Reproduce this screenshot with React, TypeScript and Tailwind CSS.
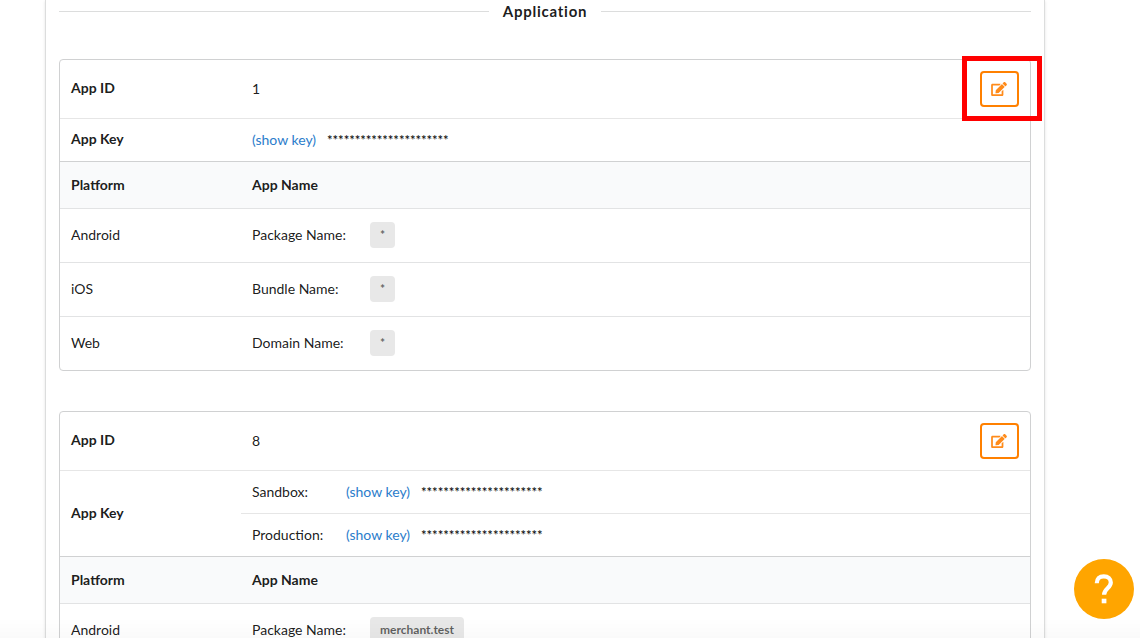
import React from "react";
import { FaEdit } from "react-icons/fa";

const MASK = "**********************";

type AppKey = { label?: string };
type Platform = { platform: string; label: string; value: string };

const KeyCell = ({ label }: AppKey) => (
  <td className="h-[43px] border-t border-[#e6e6e6] px-[11px]">
    <div className="flex items-center">
      {label && <span className="w-[94px]">{label}</span>}
      <a href="#show-key" className="text-[#2b7dcb]">(show key)</a>
      <span className="ml-[11px] text-[13px] font-medium text-black">{MASK}</span>
    </div>
  </td>
);

const AppTable = ({ id, keys, platforms, highlighted }: {
  id: string;
  keys: AppKey[];
  platforms: Platform[];
  highlighted?: boolean;
}) => (
  <div className="mb-10 rounded border border-[#d0d1d2]">
    <table className="w-full table-fixed border-separate border-spacing-0">
      <colgroup>
        <col className="w-[181px]" />
        <col />
      </colgroup>
      <tbody>
        <tr>
          <th scope="row" className="h-[58px] px-[11px] pb-0.5 text-left font-bold">App ID</th>
          <td className="px-[11px]">
            <div className="flex items-center justify-between">
              {id}
              <div className="relative">
                <button
                  type="button"
                  aria-label="Edit application"
                  className="flex h-9 w-[39px] items-center justify-center rounded border-2 border-[#ff8000] pr-px text-[#ff8b1a]"
                >
                  <FaEdit className="h-[14px] w-4" />
                </button>
                {highlighted && (
                  <div className="pointer-events-none absolute -top-[15px] -right-[23px] -bottom-[14px] -left-[18px] border-5 border-[#ff0000]" />
                )}
              </div>
            </div>
          </td>
        </tr>
        {keys.map((key, i) => (
          <tr key={i}>
            {i === 0 && (
              <th
                scope="row"
                rowSpan={keys.length}
                className="border-t border-[#e6e6e6] px-[11px] pb-0.5 text-left font-bold"
              >
                App Key
              </th>
            )}
            <KeyCell label={key.label} />
          </tr>
        ))}
        <tr className="bg-[#f9fafb]">
          <th scope="col" className="h-[47px] border-t border-[#d0d1d2] px-[11px] text-left font-bold">Platform</th>
          <th scope="col" className="border-t border-[#d0d1d2] px-[11px] text-left font-bold">App Name</th>
        </tr>
        {platforms.map(({ platform, label, value }) => (
          <tr key={platform}>
            <td className="h-[54px] border-t border-[#e2e3e4] px-[11px] pb-0.5">{platform}</td>
            <td className="border-t border-[#e2e3e4] px-[11px] pb-0.5">
              <div className="flex items-center">
                <span className="w-[118px]">{label}</span>
                <span className="rounded bg-[#e8e8e8] px-[10px] py-[5px] text-xs leading-4 font-bold text-black/60">
                  {value}
                </span>
              </div>
            </td>
          </tr>
        ))}
      </tbody>
    </table>
  </div>
);

export default function App() {
  return (
    <div className="h-screen overflow-hidden bg-white font-['Lato',sans-serif] text-sm leading-5 text-black/90">
      <main className="mr-[95px] ml-[45px] border-x border-[#dcdddd] px-[13px] shadow-sm">
        <h4 className="mb-[37px] flex items-center text-[15px] leading-[22px] font-bold tracking-wider">
          <span className="h-px flex-1 bg-[#dcdddd]" />
          <span className="px-[14px]">Application</span>
          <span className="h-px flex-1 bg-[#dcdddd]" />
        </h4>
        <AppTable
          id="1"
          highlighted
          keys={[{}]}
          platforms={[
            { platform: "Android", label: "Package Name:", value: "*" },
            { platform: "iOS", label: "Bundle Name:", value: "*" },
            { platform: "Web", label: "Domain Name:", value: "*" },
          ]}
        />
        <AppTable
          id="8"
          keys={[{ label: "Sandbox:" }, { label: "Production:" }]}
          platforms={[{ platform: "Android", label: "Package Name:", value: "merchant.test" }]}
        />
      </main>

      <div className="pointer-events-none fixed inset-x-0 bottom-0 h-5 bg-linear-to-t from-black/2 to-transparent" />

      <button
        type="button"
        aria-label="Help"
        className="fixed right-[6px] bottom-[19px] flex size-[60px] items-center justify-center rounded-full bg-[#ffa500] text-white"
      >
        <svg viewBox="0 0 20 32" className="h-8 w-5" aria-hidden="true">
          <path d="M2.800 10.300C2.800 5.600 5.500 3.300 9.800 3.300s7 2.500 7 6.300c0 5.600-6.700 5.800-6.700 12.100" fill="none" stroke="currentColor" strokeWidth="4.200" />
          <path d="M7.700 25.700h4.700v4.600H7.700z" fill="currentColor" />
        </svg>
      </button>
    </div>
  );
}
